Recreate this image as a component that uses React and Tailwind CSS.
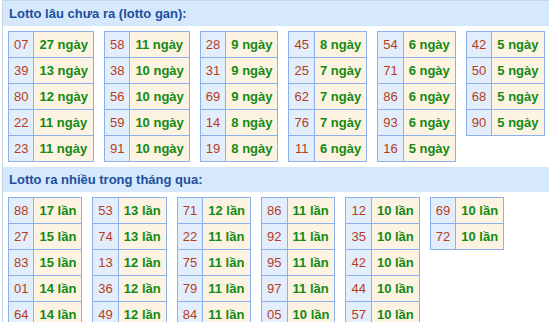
const gan = [
  [["07", 27], ["39", 13], ["80", 12], ["22", 11], ["23", 11]],
  [["58", 11], ["38", 10], ["56", 10], ["59", 10], ["91", 10]],
  [["28", 9], ["31", 9], ["69", 9], ["14", 8], ["19", 8]],
  [["45", 8], ["25", 7], ["62", 7], ["76", 7], ["11", 6]],
  [["54", 6], ["71", 6], ["86", 6], ["93", 6], ["16", 5]],
  [["42", 5], ["50", 5], ["68", 5], ["90", 5]],
];

const nhieu = [
  [["88", 17], ["27", 15], ["83", 15], ["01", 14], ["64", 14]],
  [["53", 13], ["74", 13], ["13", 12], ["36", 12], ["49", 12]],
  [["71", 12], ["22", 11], ["75", 11], ["79", 11], ["84", 11]],
  [["86", 11], ["92", 11], ["95", 11], ["97", 11], ["05", 10]],
  [["12", 10], ["35", 10], ["42", 10], ["44", 10], ["57", 10]],
  [["69", 10], ["72", 10]],
];

function StatTable({ rows, unit }) {
  return (
    <table className="shrink-0 border-collapse text-[13px] leading-none">
      <tbody>
        {rows.map(([num, n]) => (
          <tr key={num} className="h-[26px]">
            <td className="border border-[#8cb0ec] bg-[#e2eefc] px-[5px] text-center text-[#b83c1c]">{num}</td>
            <td className="border border-[#8cb0ec] bg-[#fdf3e2] px-[5px] font-bold whitespace-nowrap text-[#138a13]">
              {n} {unit}
            </td>
          </tr>
        ))}
      </tbody>
    </table>
  );
}

function Section({ title, tables, unit }) {
  return (
    <div>
      <div className="h-[25px] bg-[#d6e8fb] pl-[6px] flex items-center text-[13px] font-bold text-[#1d4f9f]">
        {title}
      </div>
      <div className="flex items-start gap-x-[10px] pl-[5px] py-[5px]">
        {tables.map((rows, i) => (
          <StatTable key={i} rows={rows} unit={unit} />
        ))}
      </div>
    </div>
  );
}

export default function App() {
  return (
    <div className="w-[549px] h-[322px] overflow-hidden bg-white" style={{ fontFamily: '"Liberation Sans", Arial, sans-serif' }}>
      <div className="ml-[2px] border-l border-t border-[#c8d5e4]">
        <Section title="Lotto lâu chưa ra (lotto gan):" tables={gan} unit="ngày" />
        <Section title="Lotto ra nhiều trong tháng qua:" tables={nhieu} unit="lần" />
      </div>
    </div>
  );
}
